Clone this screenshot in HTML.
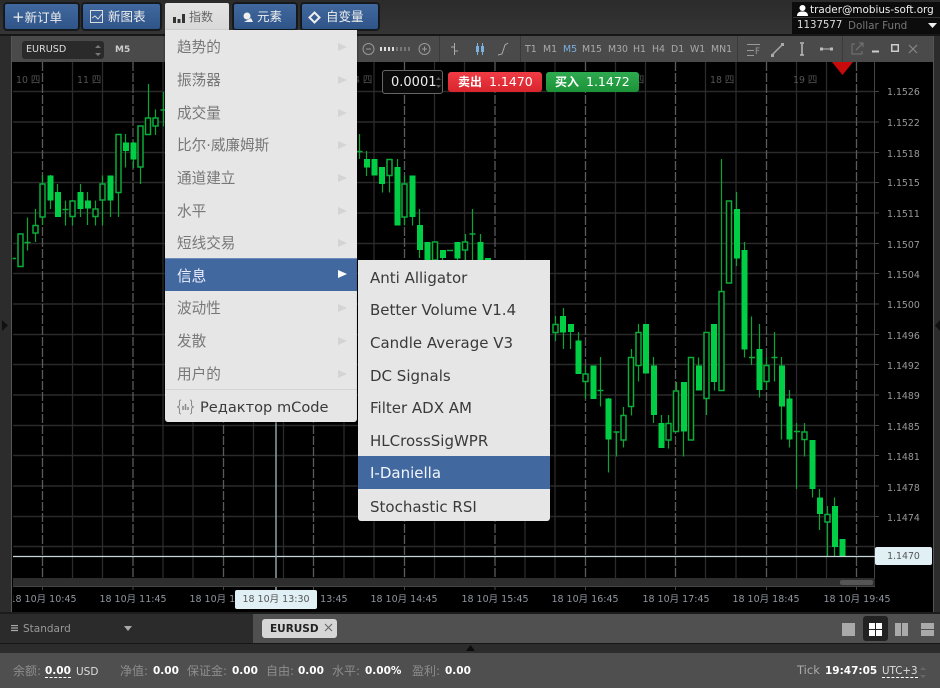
<!DOCTYPE html>
<html><head><meta charset="utf-8"><style>
html,body{margin:0;padding:0;width:940px;height:688px;overflow:hidden;background:#2c2c2c}
body{position:relative;font-family:"DejaVu Sans","Noto Sans CJK SC",sans-serif}
div,span.a{position:absolute;box-sizing:border-box}
.t{position:absolute;white-space:nowrap;line-height:1}
.btn{position:absolute;top:3px;height:27px;background:linear-gradient(#41699f,#2f5488);border:1px solid #11171f;border-radius:3px;color:#eee;font-size:12.5px;line-height:26px;outline:1px solid #1a1a1a;white-space:nowrap}
.mi{position:absolute;left:0;width:192px;height:33px;line-height:33px;padding-left:12px;color:#777;font-size:14.6px;white-space:nowrap}
.mi i{position:absolute;right:10px;top:12px;width:0;height:0;border-left:9px solid #d4d4d4;border-top:4px solid transparent;border-bottom:4px solid transparent}
.si{position:absolute;left:0;width:192px;height:33px;line-height:33px;padding-left:12px;color:#3a3a3a;font-size:15px;white-space:nowrap}
.ax{position:absolute;left:887px;font-size:9.4px;line-height:12px;color:#999;white-space:nowrap}
.xl{position:absolute;top:594px;width:100px;text-align:center;font-size:9.5px;line-height:11px;color:#8f97a0;white-space:nowrap}
.dl{position:absolute;top:75px;font-size:9.4px;line-height:11px;color:#555;white-space:nowrap}
.tf{position:absolute;top:44px;font-size:9.4px;line-height:12px;color:#aaa;white-space:nowrap}
.f{position:absolute;top:665px;font-size:12px;line-height:13px;color:#8d8d8d;white-space:nowrap}
.b{position:absolute;top:665px;font-size:10.5px;line-height:13px;color:#fff;font-weight:bold;white-space:nowrap}
</style></head><body>

<!-- top bar -->
<div style="left:0;top:0;width:940px;height:34px;background:linear-gradient(#2b2b2b,#353535)"></div>
<div style="left:0;top:34px;width:940px;height:2px;background:#161616"></div>

<div class="btn" style="left:4px;width:75px;padding-left:7px"><span style="font-size:15px">+</span><span>新订单</span></div>
<div class="btn" style="left:82px;width:79px;padding-left:25px">新图表
<svg style="position:absolute;left:7px;top:6px" width="14" height="14"><path d="M.5.5h12v12H.5z" fill="none" stroke="#ddd"/><path d="M2 8l3-2 3 3 4-5" fill="none" stroke="#ddd"/></svg></div>
<div style="position:absolute;left:165px;top:3px;width:64px;height:28px;background:linear-gradient(#e4e4e4,#d8d8d8);border-radius:2px 2px 0 0;color:#666;font-size:12px;line-height:28px;padding-left:24px">指数
<svg style="position:absolute;left:8px;top:10px" width="12" height="10"><path d="M0 4h3v6H0zM4.500 6h3v4h-3zM9 1h3v9H9z" fill="#333"/></svg></div>
<div class="btn" style="left:233px;width:64px;padding-left:23px">元素
<svg style="position:absolute;left:7px;top:7px" width="13" height="13"><circle cx="6" cy="5" r="3.500" fill="#eee"/><path d="M3 11h9l-2-4z" fill="#eee"/></svg></div>
<div class="btn" style="left:301px;width:78px;padding-left:24px">自变量
<svg style="position:absolute;left:6px;top:7px" width="13" height="13"><path d="M6.500 1.500l5 5-5 5-5-5z" fill="none" stroke="#eee" stroke-width="2"/></svg></div>

<!-- user box -->
<div style="left:792px;top:2px;width:148px;height:32px;background:#0c0c0c"></div>
<div style="left:793px;top:17px;width:147px;height:1px;background:#333"></div>
<svg style="position:absolute;left:797px;top:5px" width="11" height="11"><circle cx="5.500" cy="3" r="3" fill="#fff"/><path d="M0 11c0-4 3-4.500 5.500-4.500S11 7 11 11z" fill="#fff"/></svg>
<div class="t" style="left:810px;top:5px;font-size:10.4px;color:#eee">trader@mobius-soft.org</div>
<div class="t" style="left:797px;top:21px;font-size:10.2px;color:#ddd">1137577</div>
<div class="t" style="left:848px;top:21px;font-size:10.4px;color:#777">Dollar Fund</div>
<svg style="position:absolute;left:928px;top:23px" width="9" height="5"><path d="M0 0h9L4.500 5z" fill="#eee"/></svg>

<!-- chart window frame -->
<div style="left:12px;top:36px;width:921px;height:26px;background:#4a4a4a"></div>
<div style="left:12px;top:62px;width:921px;height:550px;background:#000"></div>
<div style="left:11px;top:36px;width:1px;height:576px;background:#555"></div>
<div style="left:933px;top:36px;width:1px;height:576px;background:#555"></div>

<!-- toolbar -->
<div style="left:22px;top:41px;width:82px;height:18px;background:#2a2a2a;border-radius:3px"></div>
<div class="t" style="left:26px;top:45px;font-size:9.6px;color:#ddd">EURUSD</div>
<svg style="position:absolute;left:95px;top:45px" width="6" height="11"><path d="M0 3l3-3 3 3zM0 8h6l-3 3z" fill="#777"/></svg>
<div class="t" style="left:115px;top:46px;font-size:9px;font-weight:bold;color:#ccc">M5</div>

<svg style="position:absolute;left:357px;top:36px" width="490" height="26" fill="none">
<path d="M82.500 0v26M163.500 0v26M380.500 0v26M485.500 0v26" stroke="#3a3a3a"/>
<circle cx="11.500" cy="13" r="5.500" stroke="#999"/><path d="M9 13h5" stroke="#999"/>
<circle cx="67.500" cy="13" r="5.500" stroke="#999"/><path d="M65 13h5M67.500 10.500v5" stroke="#999"/>
<path d="M24 11v4M28 11v4M32 11v4M36 11v4" stroke="#ddd" stroke-width="2"/>
<path d="M40 11v4M44 11v4M48 11v4M52 11v4" stroke="#777" stroke-width="2"/>
<path d="M97.500 7v12M94 11h3.500M97.500 15h3.500" stroke="#aaa"/>
<path d="M120.500 7v12M125.500 7v12" stroke="#7ab0dd"/>
<path d="M119 10h3v6h-3zM124 10h3v6h-3z" fill="#7ab0dd"/>
<path d="M141 19l4-1 3-9 3-2" stroke="#aaa"/>
<path d="M390 8.500h13M390 14.500h7M390 19.500h7" stroke="#999"/>
<path d="M415 19l10-10" stroke="#aaa" stroke-width="1.500"/><path d="M414 18h3v3h-3zM424 7h3v3h-3z" fill="#aaa"/>
<path d="M445 8v11M443 7h4M443 19h4" stroke="#bbb" stroke-width="1.500"/>
<path d="M464 13h11" stroke="#bbb"/><path d="M463 11.500h3v3h-3zM473 11.500h3v3h-3z" fill="#bbb"/>
</svg>
<div class="t" style="left:755px;top:48px;font-size:8.5px;color:#999">F</div>
<svg style="position:absolute;left:847px;top:36px" width="80" height="26" fill="none">
<path d="M8 8h-3v10h10v-3M9 14l7-7M12 7h4v4" stroke="#777"/>
<path d="M25 15.500h7" stroke="#ccc" stroke-width="2"/>
<path d="M44.750 8.750h6.500v6.500h-6.500z" stroke="#ccc" stroke-width="1.500"/>
<path d="M62 9l8 8M70 9l-8 8" stroke="#888" stroke-width="1.200"/>
</svg>

<div class="tf" style="left:525px">T1</div><div class="tf" style="left:543px">M1</div>
<div class="tf" style="left:563px;color:#7ab0e0">M5</div><div class="tf" style="left:582px">M15</div>
<div class="tf" style="left:608px">M30</div><div class="tf" style="left:633px">H1</div>
<div class="tf" style="left:652px">H4</div><div class="tf" style="left:671px">D1</div>
<div class="tf" style="left:690px">W1</div><div class="tf" style="left:711px">MN1</div>

<!-- chart svg -->
<svg style="position:absolute;left:0;top:0" width="940" height="688" fill="none">
<path stroke="#2a2a2a" stroke-width="1.400" d="M13 91.500H875M13 122H875M13 152.500H875M13 182.500H875M13 213H875M13 243.500H875M13 273.500H875M13 304H875M13 334.500H875M13 364.500H875M13 395H875M13 425.500H875M13 455.500H875M13 486H875M13 516.500H875M13 546.500H875"/>
<path stroke="#2c2c2c" stroke-width="1.300" d="M72.500 62V578M102.500 62V578M163 62V578M193 62V578M253.500 62V578M283.500 62V578M344 62V578M374 62V578M434.500 62V578M464.500 62V578M525 62V578M555 62V578M615.500 62V578M645.500 62V578M705.500 62V578M736 62V578M796.500 62V578M826.500 62V578"/>
<path stroke="#5a5a5a" stroke-width="1.300" stroke-dasharray="9 2" d="M42.500 62V578M133 62V578M223.500 62V578M313.500 62V578M404.500 62V578M495 62V578M585.500 62V578M675.500 62V578M766.500 62V578M856.500 62V578"/>
<path stroke="#444" d="M874.500 62V578M42.500 587V590M133 587V590M223.500 587V590M313.500 587V590M404.500 587V590M495 587V590M585.500 587V590M675.500 587V590M766.500 587V590M856.500 587V590"/>
<path stroke="#444" d="M875 91.500h4M875 122h4M875 152.500h4M875 182.500h4M875 213h4M875 243.500h4M875 273.500h4M875 304h4M875 334.500h4M875 364.500h4M875 395h4M875 425.500h4M875 455.500h4M875 486h4M875 516.500h4"/>

<!-- wicks -->
<path stroke="#0aa634" stroke-width="1.200" d="M27.500 217.500V250.500M35.500 209V242M42.500 175V225M50.500 175V209M57.500 184V217M65.500 200.500V225.500M72.500 200V225.500M80.500 184V217M87.500 192V225M95.500 200.500V225.500M102.500 175.500V225.500M110.500 175.500V217M118.500 134V217M125.500 134V167.500M133.500 142V168M140.500 126V184M148.500 84V134M155.500 109.500V135M163.500 92V126.500M359.500 134V159M366.500 151V176M382.500 167V192.500M389.500 159V192.500M397.500 159V167M404.500 175.500V225.500M412.500 175.500V225.500M419.500 209V258M442.500 250V260M457.500 242V260M465.500 234V260M472.500 209V260M480.500 234V260M555.500 316V341M563.500 308V349M570.500 324V349M578.500 332V374M585.500 365.500V399M600.500 357V406.500M608.500 398V472.500M616.500 432V456.500M623.500 407V447.500M631.500 349V415.500M638.500 324V381.500M653.500 357V423M661.500 415V448M668.500 415V448.500M676.500 382V431M683.500 382V456.500M698.500 357.500V390M706.500 332V415M714.500 324V390.500M721.500 159V291M736.500 192V266M744.500 242V357.500M751.500 316.500V365M759.500 324V397.500M766.500 357V390M774.500 332V381.500M781.500 357V439.500M789.500 390V447.500M796.500 423V489M804.500 423V456.500M812.500 440V497.500M819.500 489V530M827.500 506V556M834.500 497.500V556"/>

<!-- filled -->
<path fill="#00cf45" d="M47.500 175.500h6v25h-6zM55 192h6v25h-6zM77.500 192h6v17h-6zM85 200.500h6v8h-6zM107.500 175.500h6v25h-6zM123 142.500h6v8.500h-6zM130.500 142.500h6v17h-6zM364 159h6v8.500h-6zM371.500 159h6v16.500h-6zM379 167h6v17h-6zM394.500 167h6v58.500h-6zM409.500 175.500h6v41.500h-6zM417 225h6v25h-6zM424.500 242h6v18h-6zM440 250h6v8h-6zM454.500 242h6v16.500h-6zM477.500 242h6v18h-6zM485 258h6v2h-6zM560 316h6v16.500h-6zM568 324h6v8h-6zM575.500 340.500h6v33.500h-6zM590.500 365.500h6v33.500h-6zM605.500 398.500h6v41h-6zM643 324h6v49.500h-6zM651 365.500h6v49.500h-6zM658.500 423h6v25h-6zM681 382h6v49.500h-6zM696 365.500h6v25h-6zM711 324h6v58h-6zM734 209h6v49.500h-6zM741.500 250h6v99.500h-6zM756.500 349h6v41h-6zM779 365.500h6v41h-6zM786.500 398.500h6v41h-6zM809.500 440h6v49h-6zM817 497.500h6v16.500h-6zM832 506h6v41h-6zM839.500 539h6v17h-6z"/>

<!-- hollow -->
<path stroke="#0aad38" stroke-width="1.500" fill="#000" d="M18 234h5v32.500h-5zM33 225.500h5v7.500h-5zM40 184h5v33h-5zM70 201h5v15.500h-5zM93 209h5v7.500h-5zM100 184h5v16h-5zM116 134.500h5v58h-5zM138 126h5v41h-5zM145.500 118h5v16.500h-5zM153 118h5v8h-5zM387 159.500h5v16h-5zM402 184h5v33h-5zM432.500 242h5v18h-5zM462.500 242h5v8h-5zM553 324.500h5v8h-5zM583 374h5v7.500h-5zM621 415.500h5v24.500h-5zM628.500 357.500h5v49h-5zM636 332.500h5v33h-5zM666 423.500h5v16.500h-5zM673.500 391h5v40.500h-5zM688.500 357.500h5v82.500h-5zM704 332.500h5v66h-5zM719 291.500h5v99h-5zM726.500 201h5v82h-5zM764 365.500h5v16h-5zM802 432h5v7.500h-5zM825 514.500h5v7.500h-5z"/>

<!-- doji -->
<path stroke="#0dab38" stroke-width="1.600" d="M12.500 258.500H16M24.500 242.500h6M62.500 209.500h6M160.500 110h6M356.500 151.500h6M447 250.500h6M469.500 234h6M597.500 390.500h6M613.500 432h6M749 357.500h6M771.500 357.500h6M794 431.500h6"/>

<!-- crosshair -->
<path stroke="#c8d8da" stroke-width="1.200" d="M13 556.500H875"/>
<path stroke="#8ea3a6" stroke-width="1.500" d="M276 422V592"/>
<path fill="#c80a0a" d="M832 62h21l-10.500 13z"/>
</svg>

<!-- scroll strip -->
<div style="left:13px;top:578px;width:862px;height:9px;background:#2e2e2e;border-bottom:1px solid #444"></div>
<div style="left:840px;top:580px;width:33px;height:5px;background:#555;border-radius:2px"></div>

<!-- axis labels -->
<div class="ax" style="top:87px">1.1526</div><div class="ax" style="top:118px">1.1522</div>
<div class="ax" style="top:149px">1.1518</div><div class="ax" style="top:178px">1.1515</div>
<div class="ax" style="top:209px">1.1511</div><div class="ax" style="top:240px">1.1507</div>
<div class="ax" style="top:270px">1.1504</div><div class="ax" style="top:300px">1.1500</div>
<div class="ax" style="top:331px">1.1496</div><div class="ax" style="top:361px">1.1492</div>
<div class="ax" style="top:391px">1.1489</div><div class="ax" style="top:422px">1.1485</div>
<div class="ax" style="top:452px">1.1481</div><div class="ax" style="top:483px">1.1478</div>
<div class="ax" style="top:513px">1.1474</div>
<div style="left:875px;top:547px;width:57px;height:18px;background:#e0f0f5;border-radius:2px;color:#555;font-size:9.4px;line-height:19px;text-align:center">1.1470</div>

<div style="left:13px;top:590px;width:920px;height:20px;overflow:hidden">
<div class="xl" style="left:-20px;top:4px">18 10月 10:45</div>
<div class="xl" style="left:70px;top:4px">18 10月 11:45</div>
<div class="xl" style="left:160px;top:4px">18 10月 12:45</div>
<div class="xl" style="left:251px;top:4px">18 10月 13:45</div>
<div class="xl" style="left:341px;top:4px">18 10月 14:45</div>
<div class="xl" style="left:432px;top:4px">18 10月 15:45</div>
<div class="xl" style="left:522px;top:4px">18 10月 16:45</div>
<div class="xl" style="left:613px;top:4px">18 10月 17:45</div>
<div class="xl" style="left:703px;top:4px">18 10月 18:45</div>
<div class="xl" style="left:794px;top:4px">18 10月 19:45</div>
</div>
<div style="left:235px;top:590px;width:82px;height:19px;background:#e0f0f5;border-radius:2px;color:#555;font-size:9.5px;line-height:19px;text-align:center;white-space:nowrap">18 10月 13:30</div>

<div class="dl" style="left:16px">10 四</div><div class="dl" style="left:77px">11 四</div>
<div class="dl" style="left:348px">14 四</div><div class="dl" style="left:710px">18 四</div>
<div class="dl" style="left:793px">19 四</div><div class="dl" style="left:620px">16 四</div>

<!-- order widgets -->
<div style="left:382px;top:70px;width:61px;height:24px;background:#0a0a0a;border:1px solid #666;border-radius:3px;color:#eee;font-size:13px;line-height:24px;padding-left:8px;overflow:hidden">0.0001<svg style="position:absolute;left:53px;top:6px" width="5" height="11"><path d="M0 3l2.500-3L5 3zM0 8h5l-2.500 3z" fill="#555"/></svg></div>
<div style="left:448px;top:72px;width:94px;height:20px;background:linear-gradient(#f03c44,#d8242c);border-radius:3px;color:#fff;font-size:12.5px;line-height:20px;padding-left:10px;white-space:nowrap"><span style="font-weight:bold;font-size:12px">卖出</span><span style="margin-left:3px"> 1.1470</span></div>
<div style="left:546px;top:72px;width:93px;height:20px;background:linear-gradient(#2eaa50,#1c9238);border-radius:3px;color:#fff;font-size:12.5px;line-height:20px;padding-left:9px;white-space:nowrap"><span style="font-weight:bold;font-size:12px">买入</span><span style="margin-left:3px"> 1.1472</span></div>

<!-- main menu -->
<div style="left:165px;top:30px;width:192px;height:392px;background:#e6e6e6;border-radius:0 0 3px 3px;box-shadow:0 1px 2px rgba(0,0,0,.5)">
<div class="mi" style="top:1px">趋势的<i></i></div>
<div class="mi" style="top:34px">振荡器<i></i></div>
<div class="mi" style="top:67px">成交量<i></i></div>
<div class="mi" style="top:99px">比尔·威廉姆斯<i></i></div>
<div class="mi" style="top:132px">通道建立<i></i></div>
<div class="mi" style="top:165px">水平<i></i></div>
<div class="mi" style="top:197px">短线交易<i></i></div>
<div class="mi" style="top:228px;background:#41699f;color:#eef;border-top:1px solid #6a8bb8"><span style="position:relative;top:1px">信息</span><i style="border-left-color:#fff;top:11px"></i></div>
<div class="mi" style="top:262px">波动性<i></i></div>
<div class="mi" style="top:295px">发散<i></i></div>
<div class="mi" style="top:328px">用户的<i></i></div>
<div style="left:0;top:359px;width:192px;height:1px;background:#d4d4d4"></div>
<div class="t" style="left:35px;top:371px;font-size:14.6px;color:#3a3a3a">Редактор mCode</div>
<svg style="position:absolute;left:12px;top:369px" width="17" height="16" fill="none" stroke="#888"><path d="M4 1C2 1 2.500 3 2.500 5S2 7.500 .5 8C2 8.500 2.500 9 2.500 11S2 15 4 15M13 1c2 0 1.500 2 1.500 4s.5 2.500 2 3c-1.500.5-2 1-2 3s.5 4-1.500 4"/><path d="M6 7v4M8.500 5v6M11 8v3" stroke-width="1.500"/></svg>
</div>

<!-- submenu -->
<div style="left:358px;top:260px;width:192px;height:261px;background:#e6e6e6;border-radius:0 0 3px 3px;box-shadow:0 1px 2px rgba(0,0,0,.5)">
<div class="si" style="top:2px">Anti Alligator</div>
<div class="si" style="top:34px">Better Volume V1.4</div>
<div class="si" style="top:67px">Candle Average V3</div>
<div class="si" style="top:100px">DC Signals</div>
<div class="si" style="top:132px">Filter ADX AM</div>
<div class="si" style="top:165px">HLCrossSigWPR</div>
<div class="si" style="top:196px;background:#41699f;color:#f2f5fa;line-height:35px">I-Daniella</div>
<div class="si" style="top:231px">Stochastic RSI</div>
</div>

<!-- side arrows -->
<svg style="position:absolute;left:2px;top:320px" width="6" height="11"><path d="M0 0l6 5.500L0 11z" fill="#111"/></svg>
<svg style="position:absolute;left:935px;top:320px" width="5" height="11"><path d="M5 0L0 5.500 5 11z" fill="#111"/></svg>

<!-- tabs row -->
<div style="left:0;top:612px;width:940px;height:31px;background:#505050;border-top:2px solid #1c1c1c"></div>
<div style="left:0;top:614px;width:253px;height:29px;background:#2b2b2b"></div>
<svg style="position:absolute;left:11px;top:625px" width="8" height="8"><path d="M0 .5h7M0 3h7M0 5.500h7" stroke="#aaa" stroke-width="1.200"/></svg>
<div class="t" style="left:23px;top:624px;font-size:10.5px;color:#999">Standard</div>
<svg style="position:absolute;left:124px;top:626px" width="8" height="5"><path d="M0 0h8L4 5z" fill="#aaa"/></svg>
<div style="left:262px;top:619px;width:75px;height:19px;background:#d6d6d6;border-radius:3px;color:#222;font-size:10.5px;font-weight:bold;line-height:20px;padding-left:8px">EURUSD</div>
<svg style="position:absolute;left:324px;top:623px" width="9" height="9"><path d="M1 1l7 7M8 1L1 8" stroke="#666" stroke-width="1.100"/></svg>

<svg style="position:absolute;left:835px;top:614px" width="105" height="29">
<rect x="7" y="9" width="13" height="13" fill="#aaa"/>
<rect x="28" y="2" width="25" height="25" rx="3" fill="#222"/>
<path d="M34 9h6v6h-6zM41 9h6v6h-6zM34 16h6v6h-6zM41 16h6v6h-6z" fill="#fff"/>
<path d="M60 9h6v13h-6zM67 9h6v13h-6zM86 9h13v6H86zM86 16h13v6H86z" fill="#aaa"/>
</svg>

<!-- lower band -->
<div style="left:0;top:643px;width:940px;height:10px;background:#2c2c2c;border-top:1px solid #161616"></div>
<svg style="position:absolute;left:466px;top:645px" width="9" height="6"><path d="M0 6l4.500-6L9 6z" fill="#0c0c0c"/></svg>

<!-- footer -->
<div style="left:0;top:653px;width:940px;height:35px;background:#4f4f4f"></div>
<div class="f" style="left:13px">余额:</div>
<div class="b" style="left:45px;border-bottom:1px dashed #fff;line-height:12px">0.00</div>
<div class="f" style="left:76px;color:#ddd;font-size:10.5px;top:666px">USD</div>
<div class="f" style="left:120px">净值:</div><div class="b" style="left:153px">0.00</div>
<div class="f" style="left:187px">保证金:</div><div class="b" style="left:232px">0.00</div>
<div class="f" style="left:266px">自由:</div><div class="b" style="left:298px">0.00</div>
<div class="f" style="left:332px">水平:</div><div class="b" style="left:365px">0.00%</div>
<div class="f" style="left:412px">盈利:</div><div class="b" style="left:445px">0.00</div>
<div class="f" style="left:797px;font-size:11.5px;color:#aaa;top:664px">Tick</div>
<div class="b" style="left:825px">19:47:05</div>
<div class="f" style="left:882px;color:#ddd;font-size:10.3px;border-bottom:1px dashed #fff;line-height:12px">UTC+3</div>
<svg style="position:absolute;left:920px;top:667px" width="6" height="11"><path d="M0 3l3-3 3 3zM0 8h6l-3 3z" fill="#666"/></svg>

</body></html>
